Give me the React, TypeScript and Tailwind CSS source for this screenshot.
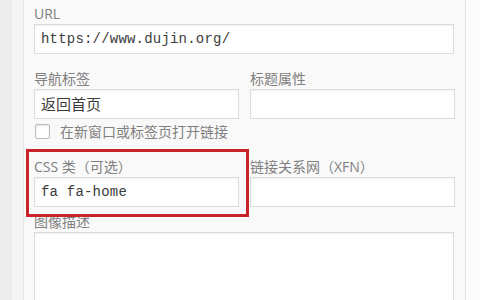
const labelCls = "block h-5 text-[14px] leading-5 text-[#808080] whitespace-nowrap";
const inputCls =
  "h-[30px] border border-[#dcdcdc] bg-white px-[6px] leading-[28px] text-[#3c3c3c] shadow-[inset_0_1px_2px_rgba(0,0,0,0.06)]";

const sans = { fontFamily: '"Open Sans", "Noto Sans CJK SC", sans-serif' };
const mono = { fontFamily: '"Liberation Mono", "Noto Sans CJK SC", monospace' };

function Field({ label, value, monoText }: { label: string; value?: string; monoText?: boolean }) {
  return (
    <div>
      <span className={labelCls}>{label}</span>
      <div
        className={monoText ? inputCls + " text-[14px] tracking-[0.2px]" : inputCls + " text-[15px]"}
        style={monoText ? mono : sans}
      >
        {value}
      </div>
    </div>
  );
}

export default function App() {
  return (
    <div className="relative flex h-[300px] w-[480px] overflow-hidden bg-[#fcfbfc]" style={sans}>
      <div className="w-[12px] shrink-0 bg-[#ececec]" />
      <div className="w-[11px] shrink-0 bg-[#f4f4f4]" />

      <div className="w-[443px] shrink-0 border-x border-[#e3e3e3] bg-[#f9f9f9] pl-[10px] pr-[11px] pt-[4px]">
        <Field label="URL" value="https://www.dujin.org/" monoText />

        <div className="mt-[15px] grid grid-cols-[205px_205px] gap-x-[11px]">
          <Field label="导航标签" value="返回首页" />
          <Field label="标题属性" />
        </div>

        <label className="mt-[2px] flex h-5 items-center gap-[10px] pl-[1px] text-[14px] text-[#808080]">
          <span className="h-[15px] w-[15px] rounded-[2px] border border-[#b8bcc0] bg-white shadow-[inset_0_1px_2px_rgba(0,0,0,0.1)]" />
          在新窗口或标签页打开链接
        </label>

        <div className="mt-[16px] grid grid-cols-[205px_205px] gap-x-[11px]">
          <Field label="CSS 类（可选）" value="fa fa-home" monoText />
          <Field label="链接关系网（XFN）" />
        </div>

        <div className="mt-[5px]">
          <span className={labelCls}>图像描述</span>
          <div className="h-[100px] border border-[#dcdcdc] bg-white shadow-[inset_0_1px_2px_rgba(0,0,0,0.06)]" />
        </div>
      </div>

      {/* red annotation box */}
      <div className="pointer-events-none absolute left-[26px] top-[149px] h-[68px] w-[223px] border-[3px] border-[#c8222b]" />
    </div>
  );
}
